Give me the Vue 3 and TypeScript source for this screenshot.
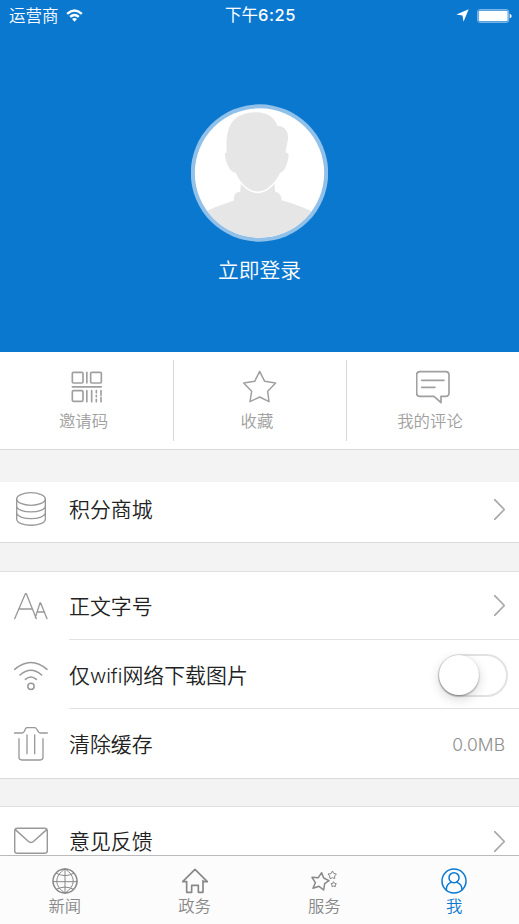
<script setup lang="ts">
import { ref } from 'vue'

interface Shortcut { id: string; label: string }
interface Tab { id: string; label: string }

const shortcuts: Shortcut[] = [
  { id: 'code', label: '邀请码' },
  { id: 'star', label: '收藏' },
  { id: 'comment', label: '我的评论' },
]
const tabs: Tab[] = [
  { id: 'news', label: '新闻' },
  { id: 'gov', label: '政务' },
  { id: 'service', label: '服务' },
  { id: 'me', label: '我' },
]
const activeTab = ref('me')
const wifiOnly = ref(false)
const cacheSize = ref('0.0MB')
</script>

<template>
  <div class="screen">
    <header class="hero">
      <div class="status">
        <div class="carrier">
          <span>运营商</span>
          <svg class="signal" viewBox="0 0 51 39">
            <path d="M1 12Q25.500-10 50 12L45 17Q25.500 0 6 17Z" />
            <path d="M10 21Q25.500 7 41 21L36 26Q25.500 17 15 26Z" />
            <path d="M18 30Q25.500 24 33 30L25.500 38Z" />
          </svg>
        </div>
        <div class="time">下午<span class="digits">6:25</span></div>
        <div class="power">
          <svg class="arrow" viewBox="0 0 38 38"><path d="M37 1L22 37L19 19L1 16Z" /></svg>
          <svg class="battery" viewBox="0 0 105 42">
            <rect class="shell" x="2" y="2" width="93" height="38" rx="6" />
            <rect x="5" y="5" width="87" height="32" rx="3" />
            <path d="M98 14Q104 16 104 21Q104 26 98 28Z" />
          </svg>
        </div>
      </div>
      <svg class="avatar" viewBox="33 27 411 413">
        <defs><clipPath id="face"><circle cx="238.500" cy="233.500" r="194" /></clipPath></defs>
        <circle cx="238.500" cy="233.500" r="206" fill="#91c1e9" />
        <circle cx="238.500" cy="233.500" r="194" fill="#fff" />
        <g clip-path="url(#face)" fill="#e6e6e6">
          <path d="M60 357Q110 332 162 316Q159 291 181 290L182 266C197 280 212 294 233 294S268 282 284 266L285 289Q303 292 305 315Q360 330 420 360V440H60Z" />
          <path class="head" d="M140 172C137 110 145 51 230 51C261 51 284 66 292 92C315 92 326 111 324 131C322 150 316 162 317 173C330 173 326 187 322 201C317 219 310 230 300 233C286 263 261 289 233 289C205 289 180 263 167 233C151 231 139 207 136 188C134 178 135 173 140 172Z" />
        </g>
      </svg>
      <div class="login">立即登录</div>
    </header>

    <nav class="shortcuts">
      <div v-for="item in shortcuts" :key="item.id" class="shortcut">
        <svg v-if="item.id === 'code'" class="icon34" viewBox="0 0 102 102">
          <g class="line" stroke-width="5">
            <rect x="7" y="7" width="32" height="32" rx="3" /><rect x="62" y="7" width="32" height="32" rx="3" /><rect x="7" y="62" width="32" height="32" rx="3" />
            <path d="M50.500 7V39M7 50.500H94M50.500 62V95M65 62V95M79 62V68M79 76V80M79 88V95M93 62V76M93 82V95" />
          </g>
        </svg>
        <svg v-else-if="item.id === 'star'" class="icon34" viewBox="0 0 102 102">
          <path class="line" stroke-width="4.500" d="M50 4L65 34L98 39L74 64L78 95L50 81L21 95L26 64L2 39L35 34Z" />
        </svg>
        <svg v-else class="icon34" viewBox="0 0 102 102">
          <path class="line" stroke-width="5" d="M11 5H89Q99 5 99 15V69Q99 79 89 79H75V98L54 79H11Q2 79 2 69V15Q2 5 11 5ZM17 31H84M17 52H57" />
        </svg>
        <span>{{ item.label }}</span>
      </div>
    </nav>

    <section class="group first">
      <div class="row">
        <svg class="icon" viewBox="0 0 102 102"><g class="line" stroke-width="4">
          <ellipse cx="51" cy="21" rx="43" ry="19" /><path d="M8 21V81C8 106 94 106 94 81V21M8 41C8 66 94 66 94 41M8 61C8 86 94 86 94 61" />
        </g></svg>
        <div class="cell"><span>积分商城</span><svg class="chevron" viewBox="0 0 33 63"><path class="line" stroke-width="5" d="M2 2L31 31.500L2 61" /></svg></div>
      </div>
    </section>

    <section class="group">
      <div class="row short">
        <svg class="icon" viewBox="0 0 102 102"><path class="line" stroke-width="4" d="M2 89L34 14H37L67 89M14 60H56M64 85L78 42H80L99 89M69 69H92" /></svg>
        <div class="cell"><span>正文字号</span><svg class="chevron" viewBox="0 0 33 63"><path class="line" stroke-width="5" d="M2 2L31 31.500L2 61" /></svg></div>
      </div>
      <div class="row wifi">
        <svg class="icon" viewBox="0 0 102 102"><g class="line" stroke-width="4.500"><path d="M2 31Q51-10 99 31M18 48Q51 19 83 48M34 61Q51 47 67 61" /><circle cx="51" cy="82" r="9.500" /></g></svg>
        <div class="cell"><span>仅<span class="latin">wifi</span>网络下载图片</span>
          <button class="switch" :class="{ on: wifiOnly }" type="button" @click="wifiOnly = !wifiOnly"><i class="knob" /></button>
        </div>
      </div>
      <div class="row">
        <svg class="icon" viewBox="0 0 102 102"><path class="line" stroke-width="4" d="M1 18H24Q29 18 32 11L35 4Q36 2 40 2H62Q66 2 68 6L72 13Q74 18 79 18H100M15 35V91Q15 99 23 99H79Q87 99 87 91V35M39 24V80M62 24V80" /></svg>
        <div class="cell last"><span>清除缓存</span><span class="size">{{ cacheSize }}</span></div>
      </div>
    </section>

    <section class="group feedback">
      <div class="row short">
        <svg class="icon" viewBox="0 0 102 102"><path class="line" stroke-width="4.500" d="M10 13H92Q100 13 100 21V80Q100 88 92 88H10Q2 88 2 80V21Q2 13 10 13ZM4 17L42 51Q51 60 60 51L98 17" /></svg>
        <div class="cell last"><span>意见反馈</span><svg class="chevron" viewBox="0 0 33 63"><path class="line" stroke-width="5" d="M2 2L31 31.500L2 61" /></svg></div>
      </div>
    </section>

    <footer class="tabs">
      <div v-for="tab in tabs" :key="tab.id" class="tab" :class="{ active: tab.id === activeTab }" @click="activeTab = tab.id">
        <svg v-if="tab.id === 'news'" class="tab-icon" viewBox="0 0 78 78"><g class="line">
          <circle cx="39" cy="39" r="36" stroke-width="4.500" />
          <path stroke-width="3" d="M39 3V75M3 41H75M13 16Q39 30 65 16M13 64Q39 50 65 64M39 3C6 23 6 55 39 75M39 3C72 23 72 55 39 75" />
        </g></svg>
        <svg v-else-if="tab.id === 'gov'" class="tab-icon" viewBox="0 0 78 78"><path class="line" stroke-width="5" d="M2 41L39 4L76 41M2 41H14V73H29V52H49V73H63V38M63 41H76" /></svg>
        <svg v-else-if="tab.id === 'service'" class="tab-icon" viewBox="0 0 78 78"><g class="line">
          <path stroke-width="4.500" d="M32 14L38 30L54 38L41 47L38 66L24 55L6 61L13 44L3 28L22 29Z" />
          <path stroke-width="3" d="M65 10L68 16L76 18L71 24L71 32L64 29L57 32L56 24L51 18L59 17ZM68 42L71 46L76 47L73 51L73 56L68 54L63 56L63 51L60 47L65 46Z" />
        </g></svg>
        <svg v-else class="tab-icon" viewBox="0 0 78 78"><g class="line" stroke-width="4.500">
          <circle cx="39" cy="39" r="36" /><circle cx="39" cy="29" r="15" /><path d="M16 65C16 54 20 47 30 43M48 43C58 47 63 54 63 65" />
        </g></svg>
        <span>{{ tab.label }}</span>
      </div>
    </footer>
  </div>
</template>

<style>
body { background: #f3f3f3; overflow: hidden; }
</style>
<style scoped>
.screen {
  width: 519px; height: 924px; display: flex; flex-direction: column; overflow: hidden;
  background: #f3f3f3; color: #222; font-family: "Noto Sans CJK SC", sans-serif; font-weight: 350;
}
svg { display: block; flex: none; }
.line { fill: none; stroke: currentColor; stroke-linejoin: round; stroke-linecap: round; }
.hero { height: 352px; flex: none; background: #0b78d0; color: #fff; display: flex; flex-direction: column; align-items: center; }
.status { width: 100%; height: 28px; box-sizing: border-box; padding: 0 7px 0 9px; display: grid; grid-template-columns: 1fr auto 1fr; align-items: center; font-size: 16.5px; line-height: 28px; }
.status svg { fill: #fff; }
.carrier { display: flex; align-items: center; gap: 7px; }
.carrier span, .time { margin-bottom: 2px; }
.signal { width: 17px; height: 13px; }
.time { white-space: nowrap; font-weight: 400; }
.digits { font-family: Inter, sans-serif; font-weight: 500; letter-spacing: .5px; }
.power { display: flex; justify-content: flex-end; align-items: center; gap: 8px; }
.arrow { width: 13px; height: 13px; }
.battery { width: 35px; height: 14px; }
.battery .shell { fill: #0b78d0; stroke: #8fc0ea; stroke-width: 3; }
.avatar { width: 137px; height: 138px; margin-top: 76px; }
.head { stroke: #fff; stroke-width: 6; paint-order: stroke; }
.login { margin-top: 12px; font-size: 20.8px; line-height: 30px; }
.shortcuts { height: 98px; flex: none; box-sizing: border-box; padding: 8px 0; display: grid; grid-template-columns: repeat(3, 1fr); background: #fff; border-bottom: 1px solid #d9d9d9; color: #a0a0a0; }
.shortcut { display: flex; flex-direction: column; align-items: center; padding-top: 10px; box-sizing: border-box; }
.shortcut + .shortcut { border-left: 1px solid #d8d8d8; }
.icon34 { width: 34px; height: 34px; }
.shortcut span { font-size: 16.4px; line-height: 24px; margin: 4px 6px 0 0; }
.group { flex: none; background: #fff; border-top: 1px solid #dfdfdf; border-bottom: 1px solid #dadada; margin-bottom: 27px; }
.group.first { margin: 32px 0 28px; border-top: 0; }
.row { display: flex; align-items: center; height: 69px; padding-left: 14px; }
.row.short { height: 68px; }
.row.wifi .icon { margin-top: 2px; }
.row.wifi .cell { padding-top: 2px; }
.group.first .row { height: 60px; box-sizing: border-box; padding-bottom: 6px; }
.icon { width: 34px; height: 34px; color: #999; margin-right: 21px; }
.cell { flex: 1; align-self: stretch; display: flex; align-items: center; justify-content: space-between; box-sizing: border-box; border-bottom: 1px solid #e2e2e2; padding-right: 14px; font-size: 20.9px; }
.cell > span:first-child { margin-bottom: 2px; }
.first .cell, .cell.last { border-bottom: 0; }
.latin { font-family: Inter, sans-serif; font-weight: 350; font-size: 20px; }
.chevron { width: 11px; height: 21px; color: #a7a7a7; }
.size { font-family: Inter, sans-serif; font-size: 17.5px; font-weight: 350; color: #8e8e8e; padding-top: 2px; }
.switch { position: relative; width: 70px; height: 43px; padding: 0; margin-right: -3px; border: 2px solid #e2e2e2; border-radius: 22px; background: #fff; }
.knob { position: absolute; left: -1px; top: -1px; width: 40px; height: 40px; border-radius: 50%; background: #fff; box-shadow: 0 1px 2px rgba(0, 0, 0, .4), 0 4px 12px rgba(0, 0, 0, .16); }
.switch.on { background: #4cd964; }
.switch.on .knob { left: 27px; }
.feedback { margin-bottom: 0; height: 48px; overflow: hidden; border-bottom: 0; }
.tabs { flex: none; height: 69px; box-sizing: border-box; border-top: 1px solid #bbb; background: #fcfcfc; display: grid; grid-template-columns: repeat(4, 1fr); color: #888; }
.tab { display: flex; flex-direction: column; align-items: center; padding-top: 12px; }
.tab.active { color: #0b78d0; }
.tab-icon { width: 26px; height: 26px; }
.tab span { font-size: 16.4px; line-height: 24px; margin-top: -1px; }
</style>
